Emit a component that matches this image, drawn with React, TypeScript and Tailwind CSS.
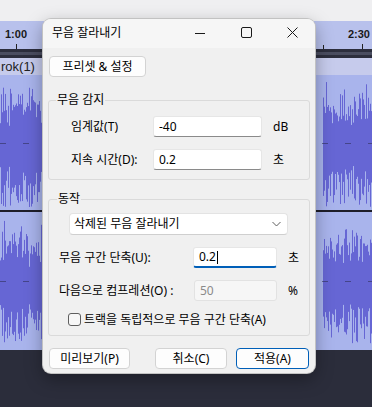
import React from "react";

function rng(seed: number) {
  let s = seed >>> 0;
  return () => {
    s = (Math.imul(s, 1664525) + 1013904223) >>> 0;
    return s / 4294967296;
  };
}

function Waveform() {
  const r = rng(12345);
  let d = "";
  const H = 275;
  const c1 = 68;
  const c2 = 206;
  for (let x = 0; x < 372; x++) {
    const dense = x < 44 || x > 322;
    const base = dense ? 0.35 : 0.2;
    const a1 = (base + 0.65 * Math.pow(r(), 0.8)) * 64;
    const a2 = (base + 0.6 * Math.pow(r(), 0.9)) * 66;
    if (x >= 315 && x <= 322) continue;
    d += `M${x + 0.5} ${c1 - a1 * (0.6 + 0.4 * r())}V${c1 + a1}`;
    d += `M${x + 0.5} ${c2 - a2 * (0.6 + 0.4 * r())}V${c2 + a2}`;
  }
  return (
    <svg width="372" height={H} viewBox={`0 0 372 ${H}`} className="block">
      <rect x="0" y="0" width="372" height={H} fill="#a9b4ec" />
      <path d={d} stroke="#6666d4" strokeWidth="1" fill="none" />
      <path d={`M0 ${c1 + 0.5}H372`} stroke="#2e2e58" strokeOpacity="0.6" strokeWidth="1" strokeDasharray="6 17" />
      <path d={`M0 ${c2 + 0.5}H372`} stroke="#2e2e58" strokeOpacity="0.6" strokeWidth="1" strokeDasharray="6 17" />
      <rect x="0" y="135" width="372" height="2" fill="#1e1e2a" />
    </svg>
  );
}

function TextInput({ value, w, focused, disabled }: { value: string; w: string; focused?: boolean; disabled?: boolean }) {
  if (disabled) {
    return (
      <div className={`${w} h-[21px] bg-[#f6f6f6] border border-[#e2e2e2] rounded-[3px] flex items-center pl-[5px] text-[#8a8a8a]`}>
        {value}
      </div>
    );
  }
  return (
    <div
      className={`${w} h-[21px] bg-white border border-[#e6e6e6] rounded-[3px] flex items-center pl-[5px] text-black ${
        focused ? "border-b-2 border-b-[#005fb8]" : "border-b-[#8a8a8a]"
      }`}
    >
      <span>{value}</span>
      {focused && <span className="inline-block w-[1px] h-[13px] bg-black ml-[1px]" />}
    </div>
  );
}

function Btn({ children, w, primary }: { children: React.ReactNode; w: string; primary?: boolean }) {
  return (
    <div
      className={`${w} h-[21px] rounded-[4px] bg-[#fdfdfd] flex items-center justify-center text-black border ${
        primary ? "border-[#005fb8]" : "border-[#d3d3d3]"
      }`}
    >
      {children}
    </div>
  );
}

export default function App() {
  return (
    <div className="relative w-[372px] h-[407px] overflow-hidden font-['Noto_Sans','Noto_Sans_CJK_KR',sans-serif] text-[12px] leading-[16px]">
      <div className="flex flex-col h-full">
        <div className="h-[21px] bg-[#efeff1]" />
        <div className="h-[28px] bg-[#b8c1ec] flex items-start justify-between pl-[5px] pt-[5px] font-['Liberation_Sans',sans-serif] font-bold text-[11px] text-[#1a1a1a] relative">
          <span>1:00</span>
          <span className="mr-[2px]">2:30</span>
          <svg className="absolute left-0 bottom-0" width="372" height="6">
            <path d="M16.5 1V6M323.5 2V6M362.5 1V6" stroke="#222" strokeWidth="1" />
          </svg>
        </div>
        <div className="h-[9px] bg-[#2c2e3d] flex flex-col justify-center">
          <div className="h-[3px] bg-[#4a4d60]" />
        </div>
        <div className="h-[17px] bg-[#c6cbec] flex items-center font-['Liberation_Sans',sans-serif] text-[13px] text-[#222] pl-[1px]">
          rok(1)
        </div>
        <Waveform />
        <div className="flex-1 bg-[#2b2d3b]" />
      </div>

      <div className="absolute left-[43px] top-[19px] w-[272px] h-[354px] rounded-[8px] bg-[#f0f0f0] overflow-hidden shadow-[0_0_0_1px_#c2c2c2,0_6px_18px_rgba(0,0,0,0.35)] flex flex-col text-black">
        <div className="h-[29px] bg-[#f6f6f6] flex items-center shrink-0">
          <span className="pl-[9px] flex-1 pb-[2px]">무음 잘라내기</span>
          <div className="w-[46px] h-full flex items-center justify-center pb-[2px]">
            <svg width="10" height="10" viewBox="0 0 10 10">
              <path d="M0 5.5H10" stroke="#1a1a1a" strokeWidth="1" />
            </svg>
          </div>
          <div className="w-[46px] h-full flex items-center justify-center pb-[2px]">
            <svg width="11" height="11" viewBox="0 0 11 11">
              <rect x="0.5" y="0.5" width="10" height="10" rx="1.5" fill="none" stroke="#1a1a1a" strokeWidth="1" />
            </svg>
          </div>
          <div className="w-[46px] h-full flex items-center justify-center pb-[2px]">
            <svg width="11" height="11" viewBox="0 0 11 11">
              <path d="M0.5 0.5L10.5 10.5M10.5 0.5L0.5 10.5" stroke="#1a1a1a" strokeWidth="1" />
            </svg>
          </div>
        </div>

        <div className="flex flex-col px-[5px]">
          <div className="mt-[8px] ml-[1px]">
            <Btn w="w-[97px]">
              <span className="text-[12px]">프리셋 &amp; 설정</span>
            </Btn>
          </div>

          <div className="relative mt-[23px] h-[80px] border border-[#dadada] rounded-[3px] flex flex-col pt-[15px] pl-[22px] gap-[12px]">
            <span className="absolute left-[7px] top-[-9px] px-[1px] bg-[#f0f0f0]">무음 감지</span>
            <div className="flex items-center">
              <span className="w-[82px]">임계값(T)</span>
              <TextInput value="-40" w="w-[109px]" />
              <span className="ml-[11px]">dB</span>
            </div>
            <div className="flex items-center">
              <span className="w-[82px]">지속 시간(D):</span>
              <TextInput value="0.2" w="w-[109px]" />
              <span className="ml-[11px]">초</span>
            </div>
          </div>

          <div className="relative mt-[19px] h-[137px] border border-[#dadada] rounded-[3px] flex flex-col pt-[13px]">
            <span className="absolute left-[8px] top-[-9px] px-[1px] bg-[#f0f0f0]">동작</span>
            <div className="ml-[20px] w-[219px] h-[22px] bg-white border border-[#e3e3e3] border-b-[#cfcfcf] rounded-[4px] flex items-center pl-[4px] pr-[6px] justify-between">
              <span>삭제된 무음 잘라내기</span>
              <svg width="9" height="6" viewBox="0 0 9 6">
                <path d="M0.5 1L4.5 5L8.5 1" fill="none" stroke="#5f5f5f" strokeWidth="1" />
              </svg>
            </div>
            <div className="flex items-center mt-[12px] pl-[10px]">
              <span className="w-[134px]">무음 구간 단축(U):</span>
              <TextInput value="0.2" w="w-[84px]" focused />
              <span className="ml-[11px]">초</span>
            </div>
            <div className="flex items-center mt-[12px] pl-[10px]">
              <span className="w-[135px]">다음으로 컴프레션(O) :</span>
              <TextInput value="50" w="w-[83px]" disabled />
              <span className="ml-[11px]">%</span>
            </div>
            <div className="flex items-center mt-[12px] pl-[19px] h-[13px]">
              <div className="w-[13px] h-[13px] rounded-[3px] border border-[#5e5e5e] bg-[#f7f7f7]" />
              <span className="ml-[3px]">트랙을 독립적으로 무음 구간 단축(A)</span>
            </div>
          </div>

          <div className="flex items-center mt-[12px] mx-[1px]">
            <Btn w="w-[81px]">미리보기(P)</Btn>
            <div className="flex-1" />
            <Btn w="w-[72px]">취소(C)</Btn>
            <div className="w-[9px]" />
            <Btn w="w-[73px]" primary>
              적용(A)
            </Btn>
          </div>
        </div>
      </div>
    </div>
  );
}
